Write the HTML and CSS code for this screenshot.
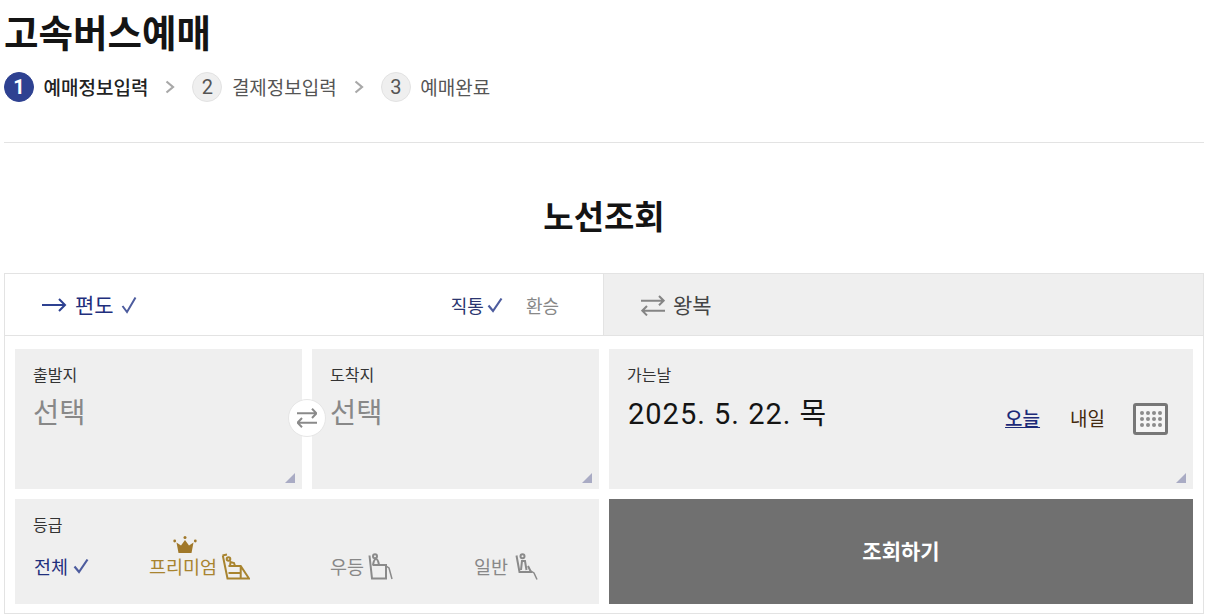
FILE: index.html
```html
<!DOCTYPE html>
<html lang="ko">
<head>
<meta charset="utf-8">
<title>고속버스예매</title>
<link rel="stylesheet" href="styles.css">
</head>
<body>
<div class="page">
  <h1 class="title">고속버스예매</h1>
  <ol class="steps">
    <li class="step active"><span class="num">1</span><span class="step-label">예매정보입력</span></li>
    <li class="chev"><svg width="10" height="14" viewBox="0 0 10 14"><path d="M1.500 1.500 8 7l-6.500 5.500" fill="none" stroke="#a8a8a8" stroke-width="2.200"/></svg></li>
    <li class="step"><span class="num">2</span><span class="step-label">결제정보입력</span></li>
    <li class="chev"><svg width="10" height="14" viewBox="0 0 10 14"><path d="M1.500 1.500 8 7l-6.500 5.500" fill="none" stroke="#a8a8a8" stroke-width="2.200"/></svg></li>
    <li class="step"><span class="num">3</span><span class="step-label">예매완료</span></li>
  </ol>
  <hr class="rule">
  <h2 class="heading">노선조회</h2>
  <section class="panel">
    <div class="tabs">
      <div class="tab tab-on">
        <svg class="arrow" width="25" height="16" viewBox="0 0 25 16"><path d="M0 8h23M17 2l6 6-6 6" fill="none" stroke="#2e4191" stroke-width="2"/></svg>
        <span class="tab-name">편도</span>
        <svg class="check" width="16" height="18" viewBox="0 0 16 18"><path d="M1.500 10l4.500 6 8.500-14.500" fill="none" stroke="#4d5c9e" stroke-width="2"/></svg>
        <span class="route-opts">
          <span class="opt opt-on">직통<svg class="check" width="16" height="16" viewBox="0 0 16 16"><path d="M1.500 8.500l4.500 5.500 8.500-12.500" fill="none" stroke="#4d5c9e" stroke-width="2.200"/></svg></span>
          <span class="opt">환승</span>
        </span>
      </div>
      <div class="tab tab-off">
        <svg class="swap-wide" width="24" height="21" viewBox="0 0 24 21"><path d="M0 5.700h22.500M18 1l4.700 4.700L18 10.300M24 15.700H1.500M6 11l-4.700 4.700L6 20.400" fill="none" stroke="#858585" stroke-width="2"/></svg>
        <span class="tab-name">왕복</span>
      </div>
    </div>
    <div class="form">
      <div class="places">
        <div class="cell"><span class="label">출발지</span><span class="value">선택</span><i class="corner"></i></div>
        <div class="cell"><span class="label">도착지</span><span class="value">선택</span><i class="corner"></i></div>
        <span class="swap"><svg width="20" height="20" viewBox="0 0 20 20"><path d="M0 5.300h19M15 .7l4.500 4.600L15 10M20 14.700H1M5 10 .5 14.700 5 19.300" fill="none" stroke="#8a8a8a" stroke-width="2"/></svg></span>
      </div>
      <div class="cell date-cell">
        <span class="label">가는날</span>
        <div class="date-row">
          <span class="date">2025. 5. 22. 목</span>
          <a class="day today">오늘</a>
          <a class="day">내일</a>
          <span class="cal"><i></i><i></i><i></i><i></i><i></i><i></i><i></i><i></i><i></i><i></i><i></i><i></i></span>
        </div>
        <i class="corner"></i>
      </div>
      <div class="cell grade-cell">
        <span class="label">등급</span>
        <div class="grades">
          <span class="grade g-all">전체<svg class="check" width="16" height="16" viewBox="0 0 16 16"><path d="M1.500 8.500l4.500 5.500 8.500-12.500" fill="none" stroke="#4d5c9e" stroke-width="2.200"/></svg></span>
          <span class="grade g-pre">
            프리미엄
            <svg class="crown" width="24" height="18" viewBox="0 0 24 18"><circle cx="1.700" cy="5" r="1.400" fill="#a0782a"/><circle cx="12" cy="1.500" r="1.500" fill="#a0782a"/><circle cx="22.300" cy="5" r="1.400" fill="#a0782a"/><path d="M3.500 6.500l4.500 3L12 4l4 5.500 4.500-3L18.500 17h-13z" fill="#a0782a"/></svg>
            <svg class="seat seat-pre" width="29" height="27" viewBox="0 0 29 27"><g fill="none" stroke="#a8842f" stroke-width="2"><path d="M1.500 2.500 6 1.500M1.800 2.500 6.500 25.500H28L19.700 13H7.500M19.700 13v12.500M7.500 20h12"/><circle cx="7.500" cy="6" r="1.800"/><path d="M9 13l.500-4 3.500 1 1 3"/></g></svg>
          </span>
          <span class="grade g-mid">우등<svg class="seat" width="25" height="27" viewBox="0 0 25 27"><g fill="none" stroke="#8a8a8a" stroke-width="2"><path d="M1.500 2.500 4 25.500h14V12H4.500"/><circle cx="7" cy="3.200" r="2"/><path d="M5 12q1-6 3-6t3 6"/><path d="M18 13l3 2 3 11" stroke-width="1.500"/></g></svg></span>
          <span class="grade g-std">일반<svg class="seat seat-std" width="23" height="27" viewBox="0 0 23 27"><g fill="none" stroke="#8a8a8a" stroke-width="2"><path d="M1.500 2.500 4.500 19H16l-3-6"/><circle cx="7.500" cy="3.200" r="2"/><path d="M6 17l1-9h3l1.500 9"/><path d="M16 18l3 2 3 6.500" stroke-width="1.500"/></g></svg></span>
        </div>
      </div>
      <button class="submit" type="button">조회하기</button>
    </div>
  </section>
</div>
</body>
</html>
```
FILE: styles.css
```css
* { box-sizing: border-box; }
html, body { margin: 0; padding: 0; background: #fff; }
body {
  font-family: "Noto Sans CJK KR", "Noto Sans", sans-serif;
  color: #141414;
  overflow: hidden;
}
.page { width: 1210px; height: 615px; padding: 0 6px 0 4px; }
.title {
  margin: 0;
  height: 72px;
  font-size: 37.500px;
  line-height: 61px;
  font-weight: 700;
  color: #141414;
}
.steps {
  list-style: none;
  margin: 0;
  padding: 0;
  height: 30px;
  display: flex;
  align-items: center;
}
.step { display: flex; align-items: center; font-size: 19px; color: #555; }
.num {
  width: 30px;
  height: 30px;
  border-radius: 50%;
  background: #efefef;
  border: 1px solid #e2e2e2;
  display: flex;
  align-items: center;
  justify-content: center;
  font-size: 20px;
  color: #555;
  margin-right: 9.500px;
  font-family: "Roboto", sans-serif;
}
.step-label { margin-top: -1px; }
.step.active { color: #222; font-weight: 500; }
.step.active .num { background: #2e4191; border-color: #2e4191; color: #fff; font-weight: 700; }
.chev { width: 44px; display: flex; padding-left: 17px; }
.chev svg { display: block; }
.rule { margin: 40px 0 0; border: 0; border-top: 1px solid #e3e3e3; height: 1px; }
.heading {
  margin: 0;
  height: 130px;
  padding-top: 48px;
  text-align: center;
  font-size: 33px;
  line-height: 48px;
  font-weight: 700;
  color: #141414;
}
.panel { border: 1px solid #e3e3e3; height: 341px; }
.tabs { display: flex; height: 62px; border-bottom: 1px solid #e3e3e3; }
.tab { display: flex; align-items: center; height: 61px; }
.tab-on { width: 598px; padding-left: 37px; color: #1f2f7d; }
.tab-off { flex: 1; background: #efefef; border-left: 1px solid #e3e3e3; padding-left: 37px; color: #444; }
.tab-name { font-size: 21px; margin-left: 8px; line-height: 28px; margin-top: -2px; }
.swap-wide { margin-top: 2px; }
.tab .check { margin-left: 7px; }
.route-opts { margin-left: auto; display: flex; font-size: 18px; padding-right: 44px; }
.opt { color: #888; display: flex; align-items: center; }
.opt-on { color: #2b3670; margin-right: 23px; }
.tab .opt .check { margin-left: 3px; }
.form {
  display: grid;
  grid-template-columns: 584px 584px;
  grid-template-rows: 140px 105px;
  gap: 10px;
  padding: 13px 10px 0;
}
.places { position: relative; display: grid; grid-template-columns: 287px 287px; gap: 10px; }
.cell { position: relative; background: #efefef; padding: 13px 18px 0; }
.label { display: block; font-size: 16px; line-height: 24px; color: #333; }
.value { display: block; font-size: 28.500px; line-height: 46px; color: #888; margin-top: 2px; }
.corner {
  position: absolute;
  right: 7px;
  bottom: 6px;
  width: 10px;
  height: 10px;
  background: #a9abc4;
  clip-path: polygon(100% 0, 100% 100%, 0 100%);
}
.swap {
  position: absolute;
  left: 272.500px;
  top: 50px;
  width: 38px;
  height: 38px;
  border-radius: 50%;
  background: #fff;
  border: 1px solid #e6e6e6;
  display: flex;
  align-items: center;
  justify-content: center;
}
.date-row { display: flex; align-items: center; height: 46px; margin-top: 2px; }
.date { font-family: "Roboto", "Noto Sans CJK KR", sans-serif; font-size: 29px; letter-spacing: 1px; color: #141414; margin-left: 1px; }
.day { font-size: 19px; color: #442a10; margin-top: 12px; }
.today { margin-left: auto; color: #1c2a78; text-decoration: underline; margin-right: 30px; font-weight: 500; }
.cal {
  margin: 16px 7px 0 28px;
  width: 35px;
  height: 32px;
  border: 3px solid #777;
  border-radius: 3px;
  background: #f5f5f5;
  display: grid;
  grid-template-columns: repeat(4, 4px);
  grid-template-rows: repeat(3, 4px);
  gap: 2px;
  justify-content: center;
  align-content: center;
}
.cal i { background: #8c8c8c; border-radius: 50%; }
.grades { display: flex; align-items: center; height: 30px; margin-top: 15px; padding-left: 1px; font-size: 18.500px; }
.grade { display: flex; align-items: center; position: relative; color: #888; white-space: nowrap; }
.g-all { width: 115px; color: #1f2f7d; }
.g-all .check { margin-left: 5px; }
.g-pre { width: 181px; color: #a8842f; }
.g-mid { width: 144px; }
.seat { margin-left: 4px; }
.seat-std { margin-left: 7px; }
.crown { position: absolute; left: 24px; top: -17px; }
.submit {
  border: 0;
  background: #707070;
  color: #fff;
  padding: 0 0 3px;
  font: 700 21px "Noto Sans CJK KR", sans-serif;
}
```
